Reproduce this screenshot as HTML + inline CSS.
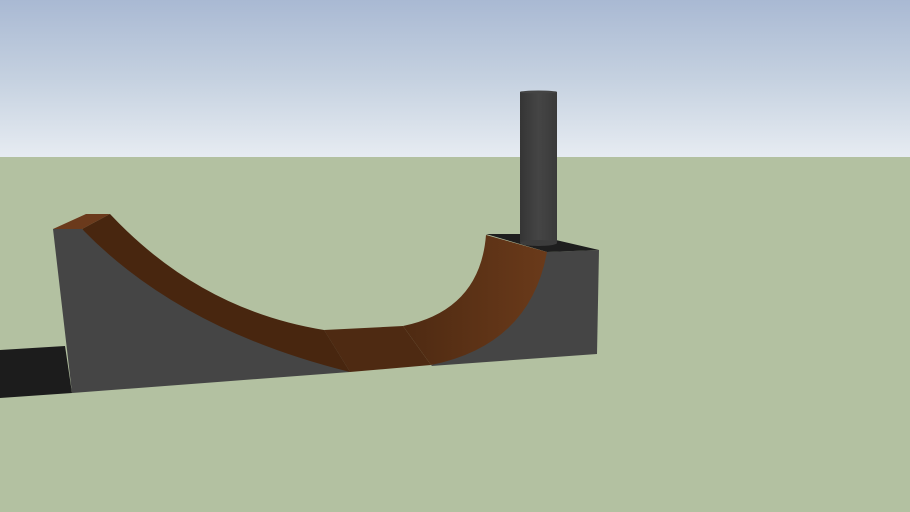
<!DOCTYPE html>
<html><head><meta charset="utf-8"><style>html,body{margin:0;padding:0;overflow:hidden}svg{display:block}</style></head>
<body>
<svg width="910" height="512" viewBox="0 0 910 512" xmlns="http://www.w3.org/2000/svg">
<defs>
<linearGradient id="sky" x1="0" y1="0" x2="0" y2="1">
<stop offset="0" stop-color="#a9b9d3"/>
<stop offset="0.5" stop-color="#c5d1e0"/>
<stop offset="1" stop-color="#e7ecf2"/>
</linearGradient>
<linearGradient id="pole" x1="0" y1="0" x2="1" y2="0">
<stop offset="0" stop-color="#353535"/>
<stop offset="0.5" stop-color="#454545"/>
<stop offset="1" stop-color="#3a3a3a"/>
</linearGradient>
<linearGradient id="rwood" x1="0" y1="0" x2="1" y2="0">
<stop offset="0" stop-color="#4e2a12"/>
<stop offset="1" stop-color="#6a3a1a"/>
</linearGradient>
</defs>
<rect x="0" y="0" width="910" height="158" fill="url(#sky)"/>
<rect x="0" y="157" width="910" height="355" fill="#b3c1a1"/>
<polygon points="0,350 65,346 72,393 0,398" fill="#1c1c1c"/>
<path d="M53,229 L82,229 Q200,330 324,330 L350,372 L72,393 Z" fill="#454545"/>
<polygon points="547,252 599,250 597,354 431,366" fill="#454545"/>
<polygon points="486,234 530,234 599,250 547,252" fill="#1e1e1e"/>
<polygon points="53,229 86,214 110,214 82,229" fill="#6b3a1c"/>
<path d="M110,214 Q200,310 324,330 L350,372 Q180,330 82,229 Z" fill="#48260f"/>
<polygon points="324,330 403,326 431,365 350,372" fill="#4e2a12"/>
<path d="M403,326 Q480,310 486,235 L547,252 Q530,345 431,365 Z" fill="url(#rwood)"/>
<rect x="520" y="92" width="37" height="151" fill="url(#pole)"/>
<ellipse cx="538.5" cy="92" rx="18.5" ry="1.5" fill="#444"/>
<ellipse cx="538.5" cy="243" rx="18.5" ry="3" fill="#3c3c3c"/>
</svg>
</body></html>
